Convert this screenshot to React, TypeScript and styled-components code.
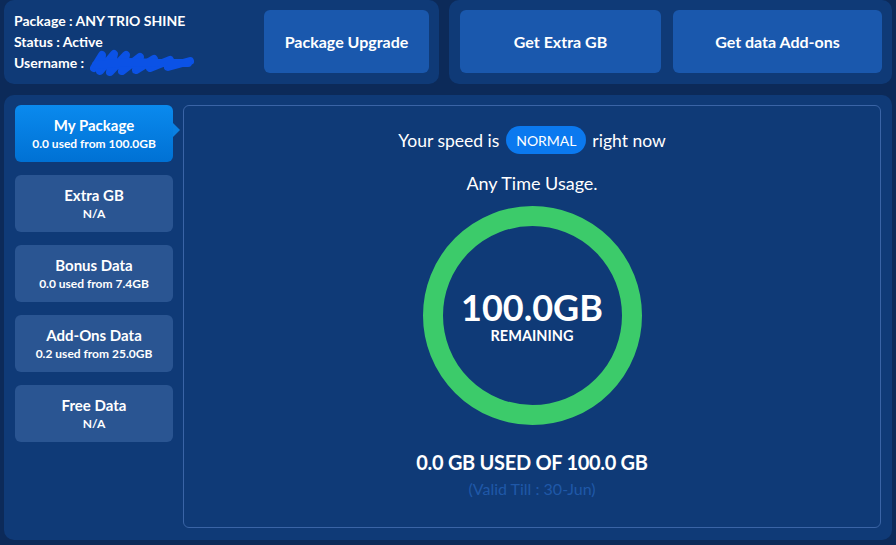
import styled, { createGlobalStyle } from "styled-components";

const GlobalStyle = createGlobalStyle`
  html, body {
    margin: 0;
    padding: 0;
    background: #0c2a59;
    font-family: Lato, "Open Sans", Arial, sans-serif;
    color: #ffffff;
  }
`;

const sideItems = [
  { title: "My Package", sub: "0.0 used from 100.0GB", active: true },
  { title: "Extra GB", sub: "N/A", active: false },
  { title: "Bonus Data", sub: "0.0 used from 7.4GB", active: false },
  { title: "Add-Ons Data", sub: "0.2 used from 25.0GB", active: false },
  { title: "Free Data", sub: "N/A", active: false },
];

// redacted username, drawn as a marker scribble
const Scribble = () => (
  <ScribbleSvg width="106" height="28" viewBox="0 0 106 28">
    <path
      d="M4 19 L12 6 L10 22 L24 5 L20 23 L36 6 L32 22 L50 8 L46 21 L64 10 L60 19 L80 11 L78 18 L100 12"
      fill="none"
      stroke="#0b52e6"
      strokeWidth="8"
      strokeLinecap="round"
      strokeLinejoin="round"
    />
    <path
      d="M6 16 L40 13 L70 14 L98 14"
      fill="none"
      stroke="#0b52e6"
      strokeWidth="8"
      strokeLinecap="round"
    />
  </ScribbleSvg>
);

export default function App() {
  return (
    <>
      <GlobalStyle />
      <Page>
        <TopRow>
          <InfoPanel>
            <InfoText>
              <InfoLine>Package : ANY TRIO SHINE</InfoLine>
              <InfoLine>Status : Active</InfoLine>
              <InfoLine>
                Username : <Scribble />
              </InfoLine>
            </InfoText>
            <ActionButton $width={165}>Package Upgrade</ActionButton>
          </InfoPanel>
          <ActionPanel>
            <ActionButton $width={201}>Get Extra GB</ActionButton>
            <ActionButton $width={209}>Get data Add-ons</ActionButton>
          </ActionPanel>
        </TopRow>
        <MainPanel>
          <Sidebar>
            {sideItems.map((item) => (
              <SideItem key={item.title} $active={item.active}>
                <SideTitle>{item.title}</SideTitle>
                <SideSub>{item.sub}</SideSub>
              </SideItem>
            ))}
          </Sidebar>
          <Content>
            <SpeedRow>
              Your speed is<SpeedPill>NORMAL</SpeedPill>right now
            </SpeedRow>
            <UsageLabel>Any Time Usage.</UsageLabel>
            <Ring>
              <RingValue>100.0GB</RingValue>
              <RingLabel>REMAINING</RingLabel>
            </Ring>
            <UsedText>0.0 GB USED OF 100.0 GB</UsedText>
            <ValidText>(Valid Till : 30-Jun)</ValidText>
          </Content>
        </MainPanel>
      </Page>
    </>
  );
}

const Page = styled.div`
  width: 896px;
  height: 545px;
  box-sizing: border-box;
  padding: 0 4px;
  display: flex;
  flex-direction: column;
  gap: 11px;
  overflow: hidden;
`;

const TopRow = styled.div`
  display: flex;
  gap: 10px;
  height: 84px;
`;

const Panel = styled.div`
  background: #0f3a77;
  border-radius: 10px;
  box-sizing: border-box;
`;

const InfoPanel = styled(Panel)`
  width: 435px;
  padding: 10px 10px 11px 10px;
  display: flex;
  justify-content: space-between;
`;

const InfoText = styled.div`
  display: flex;
  flex-direction: column;
  justify-content: center;
`;

const InfoLine = styled.div`
  font-size: 14px;
  font-weight: 700;
  line-height: 21px;
  height: 21px;
  display: flex;
  align-items: center;
  white-space: pre;
`;

const ScribbleSvg = styled.svg`
  display: block;
  margin-left: 2px;
  margin-top: 1px;
`;

const ActionPanel = styled(Panel)`
  width: 443px;
  padding: 10px 10px 11px 11px;
  display: flex;
  gap: 12px;
`;

const ActionButton = styled.div<{ $width: number }>`
  width: ${(p) => p.$width}px;
  height: 63px;
  background: #1a58ad;
  border-radius: 6px;
  display: flex;
  align-items: center;
  justify-content: center;
  font-size: 16px;
  font-weight: 700;
`;

const MainPanel = styled(Panel)`
  height: 445px;
  width: 888px;
  padding: 10px 11px 12px 11px;
  display: flex;
  gap: 10px;
`;

const Sidebar = styled.div`
  width: 158px;
  display: flex;
  flex-direction: column;
  gap: 13px;
`;

const SideItem = styled.div<{ $active: boolean }>`
  position: relative;
  height: 57px;
  border-radius: 6px;
  background: ${(p) =>
    p.$active ? "linear-gradient(#0a8aee, #0071d4)" : "#2a5592"};
  display: flex;
  flex-direction: column;
  align-items: center;
  justify-content: center;
  gap: 3px;

  &::after {
    content: "";
    display: ${(p) => (p.$active ? "block" : "none")};
    position: absolute;
    right: -7px;
    top: 18px;
    border-top: 7px solid transparent;
    border-bottom: 7px solid transparent;
    border-left: 7px solid #0a80e2;
  }
`;

const SideTitle = styled.div`
  font-size: 15px;
  font-weight: 700;
  line-height: 18px;
`;

const SideSub = styled.div`
  font-size: 12px;
  font-weight: 700;
  line-height: 14px;
`;

const Content = styled.div`
  flex: 1;
  border: 1px solid #3a64a6;
  border-radius: 6px;
  display: flex;
  flex-direction: column;
  align-items: center;
  padding-top: 20px;
`;

const SpeedRow = styled.div`
  display: flex;
  align-items: center;
  gap: 6px;
  font-size: 17.5px;
  height: 28px;
  white-space: pre;
`;

const SpeedPill = styled.span`
  background: #0b79ef;
  border-radius: 14px;
  height: 28px;
  width: 80px;
  display: inline-flex;
  align-items: center;
  justify-content: center;
  font-size: 14px;
  margin: 0 0 0 1px;
`;

const UsageLabel = styled.div`
  margin-top: 19px;
  font-size: 18px;
  line-height: 20px;
`;

const Ring = styled.div`
  margin-top: 13px;
  width: 219px;
  height: 219px;
  box-sizing: border-box;
  border: 20px solid #3ccb6a;
  border-radius: 50%;
  display: flex;
  flex-direction: column;
  align-items: center;
  justify-content: center;
`;

const RingValue = styled.div`
  font-size: 36px;
  font-weight: 700;
  line-height: 38px;
`;

const RingLabel = styled.div`
  font-size: 14.5px;
  font-weight: 700;
  line-height: 16px;
  margin-top: 2px;
`;

const UsedText = styled.div`
  margin-top: 25px;
  font-size: 20px;
  font-weight: 700;
  line-height: 24px;
  letter-spacing: -0.3px;
`;

const ValidText = styled.div`
  margin-top: 5px;
  font-size: 16px;
  line-height: 20px;
  color: #1f58a8;
`;
